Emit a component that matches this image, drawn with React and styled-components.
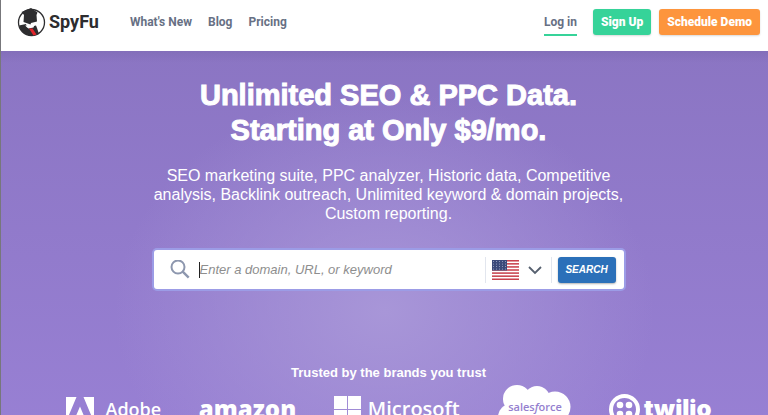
import React, { useState } from "react";
import styled, { createGlobalStyle } from "styled-components";

const GlobalStyle = createGlobalStyle`
  * {
    box-sizing: border-box;
  }

  body {
    margin: 0;
    font-family: "Liberation Sans", Arial, sans-serif;
    color: #ffffff;
  }

  button,
  input,
  select {
    font-family: inherit;
  }
`;

const Page = styled.div`
  display: flex;
  flex-direction: column;
  height: 100vh;
  overflow: hidden;
  border-left: 1px solid #77777b;
`;

const Header = styled.header`
  display: flex;
  flex: none;
  align-items: center;
  height: 51px;
  padding: 0 8px 8px 16px;
  background-color: #ffffff;
  font-family: Roboto, sans-serif;
`;

const Brand = styled.a`
  display: flex;
  align-items: center;
  gap: 3px;
  margin-right: 31px;
  color: #2d2d2f;
  font-family: Roboto, sans-serif;
  font-size: 18px;
  font-weight: 700;
  text-decoration: none;
`;

const Nav = styled.nav`
  display: flex;
  gap: 16px;
`;

const NavLink = styled.a`
  color: #677084;
  font-size: 12px;
  font-weight: 700;
  line-height: 16px;
  text-decoration: none;
`;

const Actions = styled.div`
  display: flex;
  align-items: center;
  gap: 8px;
  margin-left: auto;
`;

const LoginLink = styled(NavLink)`
  margin-right: 8px;
  padding: 6px 0 4px;
  border-bottom: 2px solid #36d399;
`;

const ActionButton = styled.button`
  height: 26px;
  padding: 0 8px;
  border: 0;
  border-radius: 3px;
  background-color: ${(props) => props.$color};
  box-shadow: 0 1px 2px rgba(0, 0, 0, 0.15);
  color: #ffffff;
  font-size: 12px;
  font-weight: 900;
`;

const Hero = styled.main`
  display: flex;
  flex: 1 0 auto;
  flex-direction: column;
  align-items: center;
  padding: 27px 16px 0 24px;
  background:
    linear-gradient(rgba(60, 50, 100, 0.1), rgba(60, 50, 100, 0) 12px),
    radial-gradient(ellipse 270px 220px at 50% 68%, #a896d8 0%, rgba(150, 127, 208, 0) 100%),
    linear-gradient(#8b75c3, #9880d4);
`;

const Title = styled.h1`
  margin: 0;
  font-size: 29px;
  font-weight: 700;
  line-height: 35px;
  text-align: center;
  -webkit-text-stroke: 1px #ffffff;
`;

const Summary = styled.p`
  max-width: 490px;
  margin: 18px 0 27px;
  font-size: 16px;
  line-height: 19px;
  text-align: center;
`;

const SearchForm = styled.form`
  display: flex;
  align-items: center;
  width: 100%;
  max-width: 470px;
  height: 39px;
  padding: 0 8px 0 16px;
  border-radius: 3px;
  background-color: #ffffff;
  box-shadow: 0 0 0 2px #9c9ce6;
`;

const SearchInput = styled.input`
  flex: 1;
  min-width: 0;
  height: 16px;
  margin-left: 9px;
  padding: 0;
  border: 0;
  border-left: 1px solid #222222;
  outline: 0;
  background: transparent;
  color: #333333;
  font-size: 13px;
  font-style: italic;

  &::placeholder {
    color: #8e8e8e;
    opacity: 1;
  }
`;

const Country = styled.label`
  position: relative;
  display: flex;
  align-items: center;
  justify-content: space-between;
  width: 67px;
  height: 26px;
  margin-right: 6px;
  padding: 1px 9px 0 6px;
  border: solid #e2e6ee;
  border-width: 0 1px;
`;

const CountrySelect = styled.select`
  position: absolute;
  inset: 0;
  width: 100%;
  opacity: 0;
`;

const SearchButton = styled.button`
  width: 58px;
  height: 26px;
  padding: 0;
  border: 0;
  border-radius: 3px;
  background-color: #2b70b9;
  box-shadow: 0 1px 2px rgba(0, 0, 0, 0.3);
  color: #ffffff;
  font-size: 10px;
  font-style: italic;
  font-weight: 700;
`;

const TrustTitle = styled.h2`
  margin: 76px 0 3px;
  font-size: 13px;
  font-weight: 700;
  line-height: 16px;
`;

const Brands = styled.ul`
  display: flex;
  align-items: center;
  justify-content: space-between;
  width: 100%;
  max-width: 646px;
  height: 50px;
  margin: 0;
  padding: 0;
  list-style: none;
`;

const BrandItem = styled.li`
  display: flex;
  align-items: center;
  gap: ${(props) => props.$gap || 0}px;
  font-family: ${(props) => props.$font || "Open Sans"}, sans-serif;
  font-size: ${(props) => props.$size || 20}px;
  font-weight: ${(props) => props.$weight || 600};
  line-height: 24px;
`;

function SpyLogo() {
  return (
    <svg width="29" height="30" viewBox="0 0 29 30" aria-hidden="true">
      <circle cx="14.5" cy="15.5" r="13" fill="#fff" stroke="#2d2d2f" strokeWidth="1.3" />
      <path d="M4.500 5 14 1l6.500 4.500-1 2.500.5 6.500-6 1.500-.5 1.500-7-2.500.5-7z" fill="#2d2d2f" />
      <path d="M2 18.500 9 17l1 3.500 9-2 1 2.500 2 6c-8 4-18 .5-20-8.500z" fill="#2d2d2f" />
      <path d="M8 18.500l5 .5 5-2.500-1.500 4-5 1z" fill="#fff" />
      <path d="M12 21.500h3.500l4 6-3 1z" fill="#e3242b" />
    </svg>
  );
}

function SearchIcon() {
  return (
    <svg width="20" height="20" viewBox="0 0 20 20" fill="none" stroke="#8d97ae" strokeWidth="2" aria-hidden="true">
      <circle cx="8" cy="7" r="6.500" />
      <path d="M12.700 11.700l6 6" strokeWidth="2.400" />
    </svg>
  );
}

function Flag() {
  return (
    <svg width="27" height="20" viewBox="0 0 27 20" aria-hidden="true">
      <rect width="27" height="20" fill="#fff" />
      {[0, 1, 2, 3, 4, 5, 6].map((stripe) => (
        <rect key={stripe} y={stripe * 3.08} width="27" height="1.540" fill="#c8414d" />
      ))}
      <rect width="15" height="10.500" fill="#3b4a7a" />
      {[0, 1, 2, 3].map((row) =>
        [0, 1, 2, 3, 4].map((star) => (
          <circle key={`${row}-${star}`} cx={1.5 + star * 3} cy={1.5 + row * 2.5} r=".5" fill="#aab3cf" />
        ))
      )}
    </svg>
  );
}

function Chevron() {
  return (
    <svg width="14" height="9" viewBox="0 0 14 9" fill="none" stroke="#56606f" strokeWidth="1.800" aria-hidden="true">
      <path d="M1 1l6 6 6-6" />
    </svg>
  );
}

function AdobeMark() {
  return (
    <svg width="28" height="25" viewBox="0 0 28 25" fill="#fff" aria-hidden="true">
      <path d="M0 0h10.500L0 25zM17.500 0H28v25zM14 9.500 20.500 25h-4.500l-2-5H9.500z" />
    </svg>
  );
}

function MicrosoftMark() {
  return (
    <svg width="27" height="27" viewBox="0 0 27 27" fill="#fff" aria-hidden="true">
      <path d="M0 0h13v13H0zM14 0h13v13H14zM0 14h13v13H0zM14 14h13v13H14z" />
    </svg>
  );
}

function SalesforceLogo() {
  return (
    <svg width="74" height="50" viewBox="0 0 74 50" role="img" aria-label="salesforce">
      <g fill="#fff">
        <circle cx="20" cy="15" r="14" />
        <circle cx="40" cy="15" r="13" />
        <circle cx="58" cy="23" r="15.500" />
        <circle cx="14" cy="33" r="13" />
        <circle cx="30" cy="34" r="14" />
        <circle cx="43" cy="31" r="14" />
      </g>
      <text x="38" y="27" textAnchor="middle" fontFamily="Open Sans, sans-serif" fontSize="11" fontWeight="600" fill="#957fcf">
        sales<tspan fontStyle="italic">f</tspan>orce
      </text>
    </svg>
  );
}

function TwilioMark() {
  return (
    <svg width="31" height="31" viewBox="0 0 31 31" fill="#fff" aria-hidden="true">
      <circle cx="15.500" cy="15.500" r="13.500" fill="none" stroke="#fff" strokeWidth="4" />
      <circle cx="11" cy="11" r="3.300" />
      <circle cx="20" cy="11" r="3.300" />
      <circle cx="11" cy="20" r="3.300" />
      <circle cx="20" cy="20" r="3.300" />
    </svg>
  );
}

function App() {
  const [query, setQuery] = useState("");

  return (
    <Page>
      <GlobalStyle />
      <Header>
        <Brand href="#">
          <SpyLogo />
          SpyFu
        </Brand>
        <Nav>
          <NavLink href="#">What's New</NavLink>
          <NavLink href="#">Blog</NavLink>
          <NavLink href="#">Pricing</NavLink>
        </Nav>
        <Actions>
          <LoginLink href="#">Log in</LoginLink>
          <ActionButton $color="#36d399">Sign Up</ActionButton>
          <ActionButton $color="#fd953d">Schedule Demo</ActionButton>
        </Actions>
      </Header>
      <Hero>
        <Title>
          Unlimited SEO &amp; PPC Data.
          <br />
          Starting at Only $9/mo.
        </Title>
        <Summary>
          SEO marketing suite, PPC analyzer, Historic data, Competitive analysis, Backlink outreach, Unlimited
          keyword &amp; domain projects, Custom reporting.
        </Summary>
        <SearchForm onSubmit={(e) => e.preventDefault()}>
          <SearchIcon />
          <SearchInput
            aria-label="Domain, URL, or keyword"
            placeholder="Enter a domain, URL, or keyword"
            value={query}
            onChange={(e) => setQuery(e.target.value)}
          />
          <Country>
            <Flag />
            <Chevron />
            <CountrySelect aria-label="Country">
              <option>US</option>
            </CountrySelect>
          </Country>
          <SearchButton type="submit">SEARCH</SearchButton>
        </SearchForm>
        <TrustTitle>Trusted by the brands you trust</TrustTitle>
        <Brands>
          <BrandItem $gap={12} $size={18}>
            <AdobeMark />
            Adobe
          </BrandItem>
          <BrandItem $size={24} $weight={800}>
            amazon
          </BrandItem>
          <BrandItem $gap={7}>
            <MicrosoftMark />
            Microsoft
          </BrandItem>
          <BrandItem>
            <SalesforceLogo />
          </BrandItem>
          <BrandItem $gap={4} $size={24} $weight={900} $font="Inter">
            <TwilioMark />
            twilio
          </BrandItem>
        </Brands>
      </Hero>
    </Page>
  );
}

export default App;
